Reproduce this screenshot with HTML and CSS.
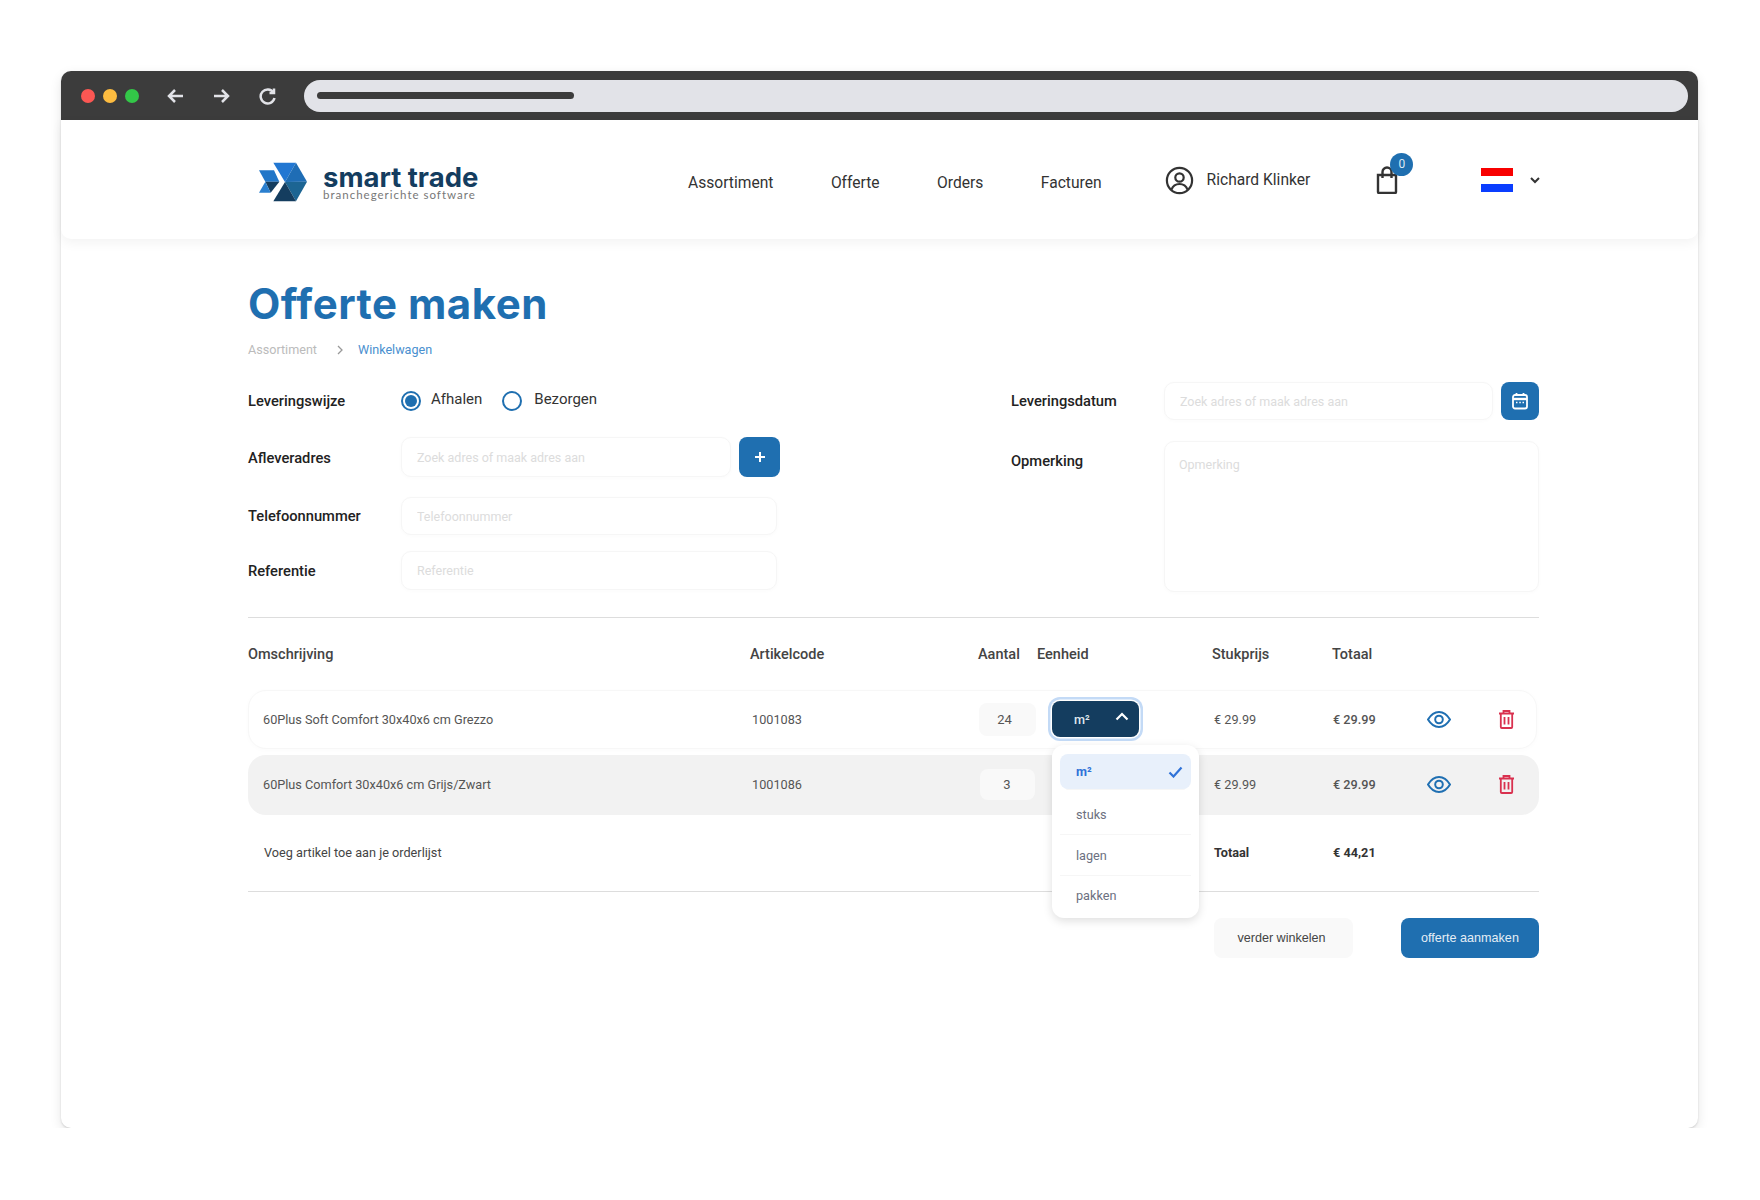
FILE: index.html
```html
<!DOCTYPE html>
<html>
  <head>
    <meta charset="UTF-8" />
    <title>Offerte maken</title>
    <link rel="stylesheet" href="styles.css">
  </head>
  <body>
    <div class="window">
      <div class="chrome">
        <span class="dot red"></span>
        <span class="dot yellow"></span>
        <span class="dot green"></span>
        <svg class="nav-arrow back" width="20" height="18" viewBox="0 0 20 18"><path d="M17 9H3M9 3L3 9l6 6" /></svg>
        <svg class="nav-arrow forward" width="20" height="18" viewBox="0 0 20 18"><path d="M3 9h14M11 3l6 6-6 6" /></svg>
        <svg class="nav-arrow reload" width="18" height="18" viewBox="0 0 18 18"><path d="M14.5 5.5A7 7 0 1 0 15.5 11" /><path d="M15 1.5v4.5h-4.5" /></svg>
        <div class="url-bar"><div class="url-text"></div></div>
      </div>

      <header class="site-header">
        <a class="logo">
          <svg width="48" height="40" viewBox="57 70 144 116">
            <polygon points="100,70 168,70 135,128" fill="#2277d2" />
            <polygon points="168,70 201,127 135,128" fill="#1f6db5" />
            <polygon points="135,128 201,127 168,186" fill="#1c6593" />
            <polygon points="135,128 168,186 100,186" fill="#143d5f" />
            <polygon points="57,93 102,93 118,127 76,127" fill="#2176c8" />
            <polygon points="76,127 118,127 92,160" fill="#143d5f" />
            <polygon points="76,127 92,160 57,160" fill="#2a7fcf" />
          </svg>
          <div class="logo-text">
            <div class="logo-name">smart trade</div>
            <div class="logo-sub">branchegerichte software</div>
          </div>
        </a>
        <nav class="main-nav">
          <a>Assortiment</a>
          <a>Offerte</a>
          <a>Orders</a>
          <a>Facturen</a>
        </nav>
        <div class="user">
          <svg width="29" height="29" viewBox="0 0 29 29" fill="none" stroke="#333" stroke-width="2.2">
            <circle cx="14.5" cy="14.5" r="12.6" />
            <circle cx="14.5" cy="11.5" r="4.2" />
            <path d="M6.5 23.5c1.5-4 4.5-5.5 8-5.5s6.5 1.500 8 5.500" />
          </svg>
          <span>Richard Klinker</span>
        </div>
        <div class="cart">
          <svg width="22" height="28" viewBox="0 0 22 28" fill="none" stroke="#333" stroke-width="2.4">
            <path d="M2 9h18v17a1 1 0 0 1-1 1H3a1 1 0 0 1-1-1z" />
            <path d="M6.500 12V6a4.500 4.500 0 0 1 9 0v6" />
          </svg>
          <span class="badge">0</span>
        </div>
        <div class="lang">
          <div class="flag"><span class="flag-red"></span><span class="flag-white"></span><span class="flag-blue"></span></div>
          <svg width="10" height="7" viewBox="0 0 10 7" fill="none" stroke="#333" stroke-width="2"><path d="M1 1l4 4 4-4" /></svg>
        </div>
      </header>

      <main class="content">
        <h1 class="page-title">Offerte maken</h1>
        <div class="breadcrumb">
          <span>Assortiment</span>
          <svg width="6" height="10" viewBox="0 0 6 10" fill="none" stroke="#999" stroke-width="1.300"><path d="M1 1l4 4-4 4" /></svg>
          <a>Winkelwagen</a>
        </div>

        <form class="order-form">
          <div class="form-col left-col">
            <div class="form-row delivery-row">
              <label>Leveringswijze</label>
              <div class="radio checked"></div>
              <span class="radio-label">Afhalen</span>
              <div class="radio"></div>
              <span class="radio-label">Bezorgen</span>
            </div>
            <div class="form-row address-row">
              <label>Afleveradres</label>
              <input class="field field-short" type="text" placeholder="Zoek adres of maak adres aan" />
              <button type="button" class="icon-button plus-button">
                <svg width="14" height="14" viewBox="0 0 14 14" fill="none" stroke="#fff" stroke-width="2"><path d="M7 2v10M2 7h10" /></svg>
              </button>
            </div>
            <div class="form-row phone-row">
              <label>Telefoonnummer</label>
              <input class="field field-wide" type="text" placeholder="Telefoonnummer" />
            </div>
            <div class="form-row reference-row">
              <label>Referentie</label>
              <input class="field field-wide" type="text" placeholder="Referentie" />
            </div>
          </div>
          <div class="form-col right-col">
            <div class="form-row date-row">
              <label>Leveringsdatum</label>
              <input class="field field-date" type="text" placeholder="Zoek adres of maak adres aan" />
              <button type="button" class="icon-button calendar-button">
                <svg width="18" height="18" viewBox="0 0 18 18" fill="none" stroke="#fff" stroke-width="1.800">
                  <rect x="2" y="3" width="14" height="13.500" rx="2" />
                  <path d="M2 7h14" stroke-width="2.400" />
                  <path d="M5.500 1v3M12.500 1v3" />
                  <path d="M5 10.500h1.500M8.300 10.500h1.500M11.500 10.500h1.500" stroke-width="1.400" />
                </svg>
              </button>
            </div>
            <div class="form-row note-row">
              <label>Opmerking</label>
              <textarea class="field field-note" placeholder="Opmerking"></textarea>
            </div>
          </div>
        </form>

        <div class="table-head">
          <span>Omschrijving</span>
          <span>Artikelcode</span>
          <span>Aantal</span>
          <span>Eenheid</span>
          <span>Stukprijs</span>
          <span>Totaal</span>
        </div>

        <div class="table-row row-white">
          <span>60Plus Soft Comfort 30x40x6 cm Grezzo</span>
          <span>1001083</span>
          <span class="qty">24</span>
          <div class="unit-cell">
            <div class="unit-select">
              <span>m²</span>
              <svg width="14" height="9" viewBox="0 0 14 9" fill="none" stroke="#fff" stroke-width="2.200"><path d="M1.500 7.500L7 2l5.500 5.500" /></svg>
            </div>
            <ul class="unit-menu">
              <li class="selected">m²
                <svg width="15" height="12" viewBox="0 0 15 12" fill="none" stroke="#2f72d8" stroke-width="2.200"><path d="M1.500 6.500l4 4 8-9" /></svg>
              </li>
              <li>stuks</li>
              <li>lagen</li>
              <li>pakken</li>
            </ul>
          </div>
          <span>€ 29.99</span>
          <span class="line-total">€ 29.99</span>
          <svg class="eye" width="24" height="17" viewBox="0 0 24 17" fill="none" stroke="#1f6fb2" stroke-width="2">
            <path d="M1 8.500C4 3.500 7.500 1 12 1s8 2.500 11 7.500C20 13.500 16.500 16 12 16S4 13.500 1 8.500z" />
            <circle cx="12" cy="8.500" r="3.800" />
          </svg>
          <svg class="trash" width="15" height="19" viewBox="0 0 15 19" fill="none" stroke="#d9314f" stroke-width="1.800">
            <path d="M0 3.500h15M4.500 3V1h6v2" />
            <path d="M1.800 3.500V17a1 1 0 0 0 1 1h9.400a1 1 0 0 0 1-1V3.500" />
            <path d="M5.500 7v7.500M9.500 7v7.500" />
          </svg>
        </div>

        <div class="table-row row-grey">
          <span>60Plus Comfort 30x40x6 cm Grijs/Zwart</span>
          <span>1001086</span>
          <span class="qty qty-small">3</span>
          <span></span>
          <span>€ 29.99</span>
          <span class="line-total">€ 29.99</span>
          <svg class="eye" width="24" height="17" viewBox="0 0 24 17" fill="none" stroke="#1f6fb2" stroke-width="2">
            <path d="M1 8.500C4 3.500 7.500 1 12 1s8 2.500 11 7.500C20 13.500 16.500 16 12 16S4 13.500 1 8.500z" />
            <circle cx="12" cy="8.500" r="3.800" />
          </svg>
          <svg class="trash" width="15" height="19" viewBox="0 0 15 19" fill="none" stroke="#d9314f" stroke-width="1.800">
            <path d="M0 3.500h15M4.500 3V1h6v2" />
            <path d="M1.800 3.500V17a1 1 0 0 0 1 1h9.400a1 1 0 0 0 1-1V3.500" />
            <path d="M5.500 7v7.500M9.500 7v7.500" />
          </svg>
        </div>

        <div class="table-row row-total">
          <span>Voeg artikel toe aan je orderlijst</span>
          <span></span>
          <span></span>
          <span></span>
          <strong>Totaal</strong>
          <strong>€ 44,21</strong>
        </div>

        <div class="actions">
          <button type="button" class="btn btn-light">verder winkelen</button>
          <button type="button" class="btn btn-primary">offerte aanmaken</button>
        </div>
      </main>
    </div>
  </body>
</html>
```

FILE: styles.css
```css
* {
  box-sizing: border-box;
}

body {
  margin: 0;
  background-color: #fff;
  font-family: Roboto, "Liberation Sans", sans-serif;
  color: #333;
}

.window {
  width: 1637px;
  height: 1057px;
  margin: 71px 0 0 61px;
  background-color: #fff;
  border-radius: 10px;
  box-shadow: 0 1px 2px rgba(0, 0, 0, 0.14), 0 4px 12px rgba(0, 0, 0, 0.1);
}

/* browser bar */
.chrome {
  display: flex;
  align-items: center;
  height: 49px;
  padding-left: 20px;
  background-color: #3c3c3c;
  border-radius: 10px 10px 0 0;
}

.dot {
  width: 14px;
  height: 14px;
  margin-right: 8px;
  border-radius: 50%;
}

.dot.red {
  background-color: #fc5753;
}

.dot.yellow {
  background-color: #fdbc40;
}

.dot.green {
  background-color: #33c748;
  margin-right: 0;
}

.nav-arrow {
  fill: none;
  stroke: #e2e3e8;
  stroke-width: 2.500;
}

.back {
  margin-left: 27px;
}

.forward {
  margin-left: 25px;
}

.reload {
  margin-left: 28px;
}

.url-bar {
  display: flex;
  align-items: center;
  width: 1384px;
  height: 32px;
  margin-left: 27px;
  padding-left: 13px;
  background-color: #e2e3e8;
  border-radius: 16px;
}

.url-text {
  width: 257px;
  height: 7px;
  background-color: #3c3c3c;
  border-radius: 4px;
}

/* site header */
.site-header {
  position: relative;
  display: flex;
  align-items: center;
  height: 119px;
  padding-left: 198px;
  background-color: #fff;
  border-radius: 0 0 10px 10px;
  box-shadow: 0 4px 12px rgba(0, 0, 0, 0.05);
}

.logo {
  display: flex;
  align-items: center;
  gap: 16px;
  width: 429px;
  margin-top: 4px;
}

.logo-text {
  margin-top: 2px;
}

.logo-name {
  font-family: Inter, sans-serif;
  font-size: 27.500px;
  font-weight: 700;
  line-height: 24px;
  color: #143d5f;
}

.logo-sub {
  font-family: Lato, sans-serif;
  font-size: 11.500px;
  line-height: 12px;
  letter-spacing: 1px;
  color: #777;
}

.main-nav {
  display: flex;
  gap: 57.500px;
  margin-top: 7px;
}

.main-nav a {
  font-size: 15.600px;
  color: #333;
}

.user {
  display: flex;
  align-items: center;
  gap: 13px;
  margin-left: 63px;
  margin-top: 1px;
  font-size: 15.600px;
}

.cart {
  position: relative;
  display: flex;
  margin-left: 66px;
}

.badge {
  position: absolute;
  top: -13px;
  left: 14px;
  width: 23px;
  height: 23px;
  border-radius: 50%;
  background-color: #1f6fb0;
  color: #dde9f3;
  font-size: 12px;
  line-height: 23px;
  text-align: center;
}

.lang {
  display: flex;
  align-items: center;
  gap: 17px;
  margin-left: 83px;
  margin-top: 1px;
}

.flag {
  width: 32px;
}

.flag span {
  display: block;
  height: 8px;
}

.flag-red {
  background-color: #f80000;
}

.flag-white {
  background-color: #fff;
}

.flag-blue {
  background-color: #0a3dff;
}

/* page */
.content {
  padding: 0 159px 0 187px;
}

.page-title {
  margin: 41px 0 0 0;
  font-family: Inter, sans-serif;
  font-size: 42px;
  font-weight: 700;
  line-height: 48px;
  letter-spacing: 0.500px;
  color: #1f6fb0;
}

.breadcrumb {
  display: flex;
  align-items: center;
  gap: 20px;
  margin-top: 14px;
  font-size: 12.600px;
  line-height: 16px;
  color: #bbb;
}

.breadcrumb a {
  margin-left: -5px;
  color: #4a90cf;
}

.order-form {
  display: flex;
  height: 237px;
  margin-top: 23px;
  border-bottom: 1px solid #ddd;
}

.form-col {
  display: flex;
  flex-direction: column;
}

.left-col {
  width: 763px;
}

.right-col {
  width: 528px;
  padding-top: 1px;
}

.form-row {
  display: flex;
  align-items: center;
}

.form-row label {
  width: 153px;
  flex-shrink: 0;
  font-size: 14.700px;
  font-weight: 500;
  color: #222;
}

.delivery-row {
  height: 40px;
}

.address-row {
  height: 40px;
  margin-top: 16px;
}

.address-row label {
  margin-top: 1px;
}

.phone-row {
  height: 38px;
  margin-top: 20px;
}

.reference-row {
  height: 39px;
  margin-top: 16px;
}

.radio {
  width: 20px;
  height: 20px;
  margin-right: 10px;
  margin-bottom: 1px;
  border: 2px solid #1f6fb0;
  border-radius: 50%;
}

.radio + .radio-label + .radio {
  margin-right: 12px;
}

.radio.checked {
  padding: 2px;
  background-clip: content-box;
  background-color: #1f6fb0;
}

.radio-label {
  margin-right: 20px;
  margin-bottom: 5px;
  font-size: 15px;
  color: #333;
}

.field {
  height: 100%;
  padding: 0 15px;
  background-color: #fff;
  border: 1px solid #f6f6f6;
  border-radius: 10px;
  box-shadow: 0 1px 4px rgba(0, 0, 0, 0.02);
  font-family: Roboto, sans-serif;
  font-size: 12.500px;
  outline: none;
}

.field::placeholder {
  color: #dcdcdc;
  opacity: 1;
}

.field-short {
  width: 330px;
}

.field-wide {
  width: 376px;
}

.field-date {
  width: 329px;
}

.field-note {
  height: 151px;
  width: 375px;
  padding: 15px 14px;
  resize: none;
}

.icon-button {
  display: flex;
  align-items: center;
  justify-content: center;
  height: 100%;
  margin-left: 8px;
  padding: 0;
  border: none;
  border-radius: 8px;
  background-color: #1f6fb0;
}

.plus-button {
  width: 41px;
}

.date-row {
  height: 38px;
}

.calendar-button {
  width: 38px;
}

.note-row {
  align-items: flex-start;
  margin-top: 21px;
}

.note-row label {
  margin-top: 11px;
}

/* table */
.table-head {
  display: grid;
  grid-template-columns: 502px 228px 59px 175px 120px 207px;
  margin-top: 27px;
  font-size: 14.500px;
  font-weight: 500;
  line-height: 20px;
  color: #444;
}

.table-row {
  display: grid;
  grid-template-columns: 489px 227px 73px 162px 119px 94px 72px 1fr;
  align-items: center;
  padding-left: 15px;
  font-size: 12.700px;
  color: #555;
}

.row-white {
  height: 59px;
  margin-top: 25px;
  margin-right: 2px;
  background-color: #fff;
  border: 1px solid #f7f7f7;
  border-radius: 18px;
  box-shadow: 0 1px 5px rgba(0, 0, 0, 0.02);
  padding-left: 14px;
  padding-bottom: 1px;
}

.row-grey {
  height: 60px;
  margin-top: 6px;
  padding-bottom: 2px;
  background-color: #f2f2f2;
  border-radius: 18px;
}

.row-total {
  height: 77px;
  padding-bottom: 2px;
  border-bottom: 1px solid #ddd;
}

.row-total strong {
  font-weight: 700;
  color: #333;
}

.row-total span:first-child {
  color: #444;
  padding-left: 1px;
}

.qty {
  width: 57px;
  height: 33px;
  padding-right: 6px;
  line-height: 33px;
  text-align: center;
  font-size: 13px;
  background-color: #f9f9f9;
  border-radius: 8px;
}

.qty-small {
  width: 55px;
  height: 31px;
  padding-right: 1px;
  line-height: 31px;
  margin-left: 1px;
}

.line-total {
  font-weight: 500;
}

.unit-cell {
  position: relative;
}

.unit-select {
  display: flex;
  align-items: center;
  justify-content: space-between;
  width: 87px;
  height: 36px;
  padding: 0 10px 0 22px;
  background-color: #143d5f;
  border-radius: 8px;
  color: #dfe7ee;
  font-weight: 500;
  box-shadow: 0 0 0 1.500px #fff, 0 0 0 4px #c3daf6;
}

.unit-select svg {
  margin-bottom: 5px;
}

.unit-menu {
  position: absolute;
  z-index: 2;
  top: 44px;
  left: 0;
  width: 147px;
  height: 173px;
  margin: 0;
  padding: 9px 8px 0 8px;
  list-style: none;
  background-color: #fff;
  border-radius: 12px;
  box-shadow: 0 3px 10px rgba(0, 0, 0, 0.13);
}

.unit-menu li {
  display: flex;
  align-items: center;
  justify-content: space-between;
  height: 41px;
  padding: 0 8px 0 16px;
  border-bottom: 1px solid #f6f6f6;
  color: #6c7080;
}

.unit-menu li:last-child {
  height: 39px;
  border-bottom: none;
}

.unit-menu li.selected {
  height: 35px;
  margin-bottom: 5px;
  border-bottom: none;
  border-radius: 8px;
  background-color: #e8f0fb;
  color: #2f72d8;
  font-weight: 700;
  box-shadow: 0 6px 0 -5px #f6f6f6;
}

.actions {
  display: flex;
  justify-content: flex-end;
  gap: 48px;
  margin-top: 26px;
}

.btn {
  height: 40px;
  border: none;
  border-radius: 8px;
  font-family: "Liberation Sans", sans-serif;
  font-size: 12.600px;
}

.btn-light {
  width: 139px;
  padding-right: 10px;
  background-color: #f9f9f9;
  color: #444;
}

.btn-primary {
  width: 138px;
  background-color: #1f6fb0;
  color: #e4edf5;
}
```
